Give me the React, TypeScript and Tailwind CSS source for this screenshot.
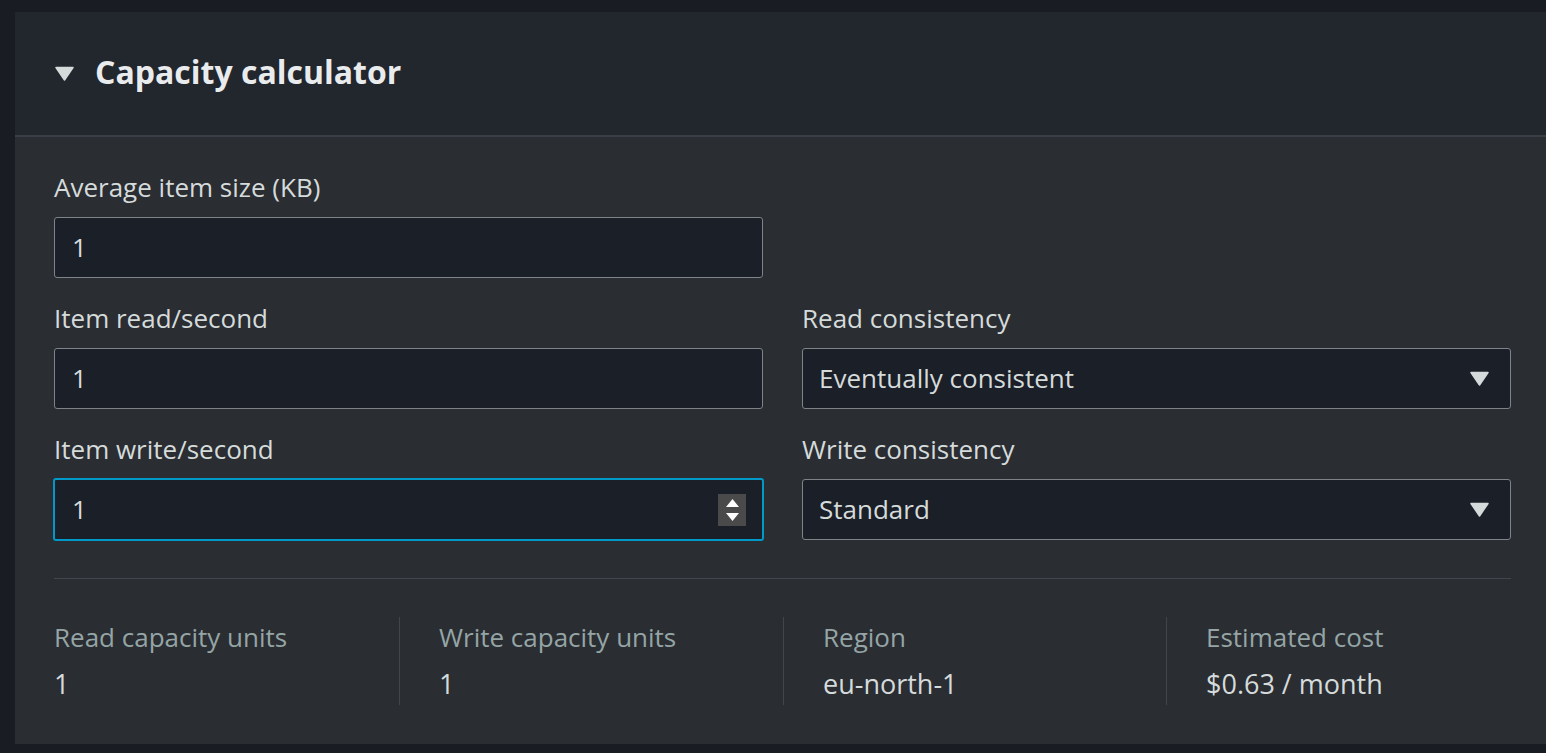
import { ReactNode } from 'react';

const font = { fontFamily: '"Open Sans", "Noto Sans", sans-serif' };

function Caret() {
  return (
    <svg width="19" height="15" viewBox="0 0 19 15" className="shrink-0">
      <path d="M1 1.5 L18 1.5 L9.5 14 Z" fill="#d5dbdb" stroke="#d5dbdb" strokeLinejoin="round" strokeWidth="1.5" />
    </svg>
  );
}

function Field({ label, children }: { label: string; children: ReactNode }) {
  return (
    <div className="flex flex-col">
      <label className="text-[26px] leading-[30px] text-[#d5dbdb] mb-[15px]">{label}</label>
      {children}
    </div>
  );
}

function TextInput({ value, focused }: { value: string; focused?: boolean }) {
  return (
    <div
      className={`flex items-center bg-[#1b1f27] rounded-[3px] ${
        focused
          ? 'h-[63px] -my-px border-2 border-[#0099c8] -mx-px pl-[17px] pr-[16px]'
          : 'h-[61px] border border-[#7d8388] pl-[17px] pr-[16px]'
      }`}
    >
      <span className="flex-1 text-[26px] text-[#d5dbdb]">{value}</span>
      {focused && (
        <div className="w-[28px] h-[32px] bg-[#4a4a4a] flex flex-col items-center justify-center gap-[6px]">
          <svg width="13" height="8" viewBox="0 0 13 8">
            <path d="M0 8 L6.5 0 L13 8 Z" fill="#ffffff" />
          </svg>
          <svg width="13" height="8" viewBox="0 0 13 8">
            <path d="M0 0 L13 0 L6.5 8 Z" fill="#ffffff" />
          </svg>
        </div>
      )}
    </div>
  );
}

function Select({ value }: { value: string }) {
  return (
    <div className="h-[61px] flex items-center bg-[#1b1f27] border border-[#7d8388] rounded-[3px] pl-[16px] pr-[21px]">
      <span className="flex-1 text-[26px] text-[#d5dbdb]">{value}</span>
      <svg width="19" height="15" viewBox="0 0 19 15">
        <path d="M1 1.5 L18 1.5 L9.5 14 Z" fill="#d5dbdb" stroke="#d5dbdb" strokeLinejoin="round" strokeWidth="1.5" />
      </svg>
    </div>
  );
}

function Stat({ label, value, first }: { label: string; value: string; first?: boolean }) {
  return (
    <div className={`flex flex-col pt-[5px] pb-[6px] ${first ? '' : 'border-l border-[#41454d] pl-[39px]'}`}>
      <span className="text-[26px] leading-[30px] text-[#95a5a6]">{label}</span>
      <span className="text-[27px] leading-[30px] text-[#d5dbdb] mt-[17px]">{value}</span>
    </div>
  );
}

export default function App() {
  return (
    <div className="w-[1546px] h-[753px] overflow-hidden bg-[#191c22] pt-[12px] pl-[15px]" style={font}>
      <div className="w-[1560px] bg-[#2a2d32]">
        {/* Header */}
        <div className="h-[125px] bg-[#22262d] flex items-center pl-[40px] gap-[21px] border-b-2 border-[#3b3e47]">
          <Caret />
          <h2 className="text-[32px] font-bold text-[#e9ebed] leading-none pb-[4px]">Capacity calculator</h2>
        </div>

        {/* Body */}
        <div className="pl-[39px] pt-[35px] pb-[39px]">
          <div className="w-[1457px] grid grid-cols-2 gap-x-[39px] gap-y-[25px]">
            <Field label="Average item size (KB)">
              <TextInput value="1" />
            </Field>
            <div />
            <Field label="Item read/second">
              <TextInput value="1" />
            </Field>
            <Field label="Read consistency">
              <Select value="Eventually consistent" />
            </Field>
            <Field label="Item write/second">
              <TextInput value="1" focused />
            </Field>
            <Field label="Write consistency">
              <Select value="Standard" />
            </Field>
          </div>

          <div className="w-[1457px] h-px bg-[#41454f] mt-[38px] mb-[38px]" />

          <div className="w-[1457px] grid grid-cols-[345px_384px_383px_1fr]">
            <Stat first label="Read capacity units" value="1" />
            <Stat label="Write capacity units" value="1" />
            <Stat label="Region" value="eu-north-1" />
            <Stat label="Estimated cost" value="$0.63 / month" />
          </div>
        </div>
      </div>
    </div>
  );
}
